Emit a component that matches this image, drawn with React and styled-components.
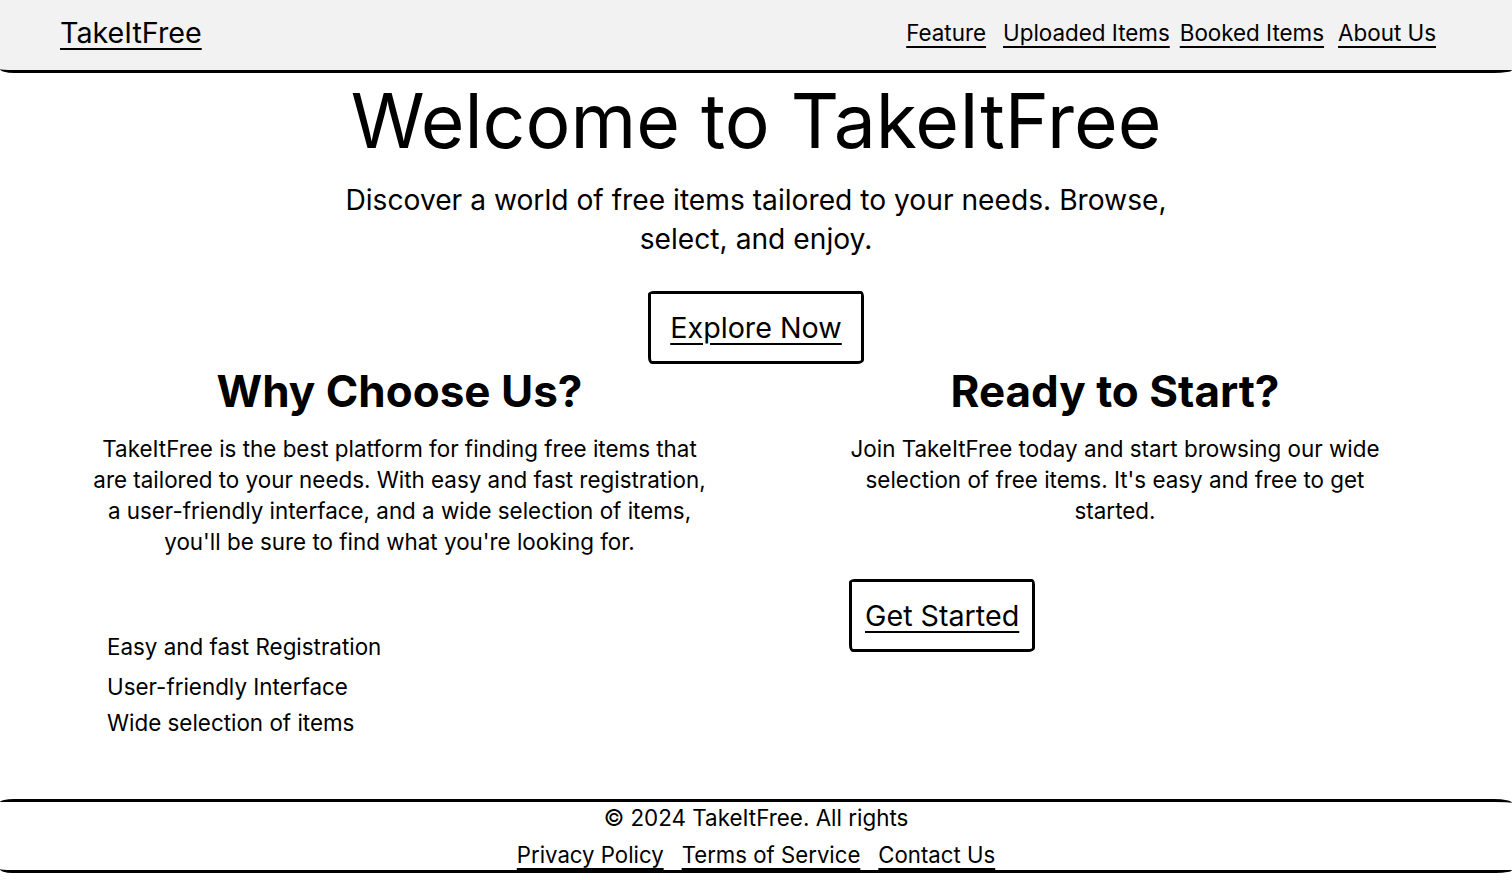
import React from "react";
import styled, { createGlobalStyle } from "styled-components";

const Global = createGlobalStyle`
  * { box-sizing: border-box; }
  html, body { margin: 0; padding: 0; background: #fff; }
  body {
    font-family: Inter, "Noto Sans", "Liberation Sans", sans-serif;
    color: #000;
  }
  a { color: inherit; }
`;

const Page = styled.div`
  width: 1512px;
  display: flex;
  flex-direction: column;
`;

const Header = styled.header`
  height: 73px;
  background: #f2f2f2;
  border-bottom: 3px solid #000;
  border-bottom-left-radius: 14px 4px;
  border-bottom-right-radius: 18px 3px;
  display: flex;
  align-items: center;
  justify-content: space-between;
  padding: 0 76px 4px 60px;
`;

const Logo = styled.a`
  font-size: 28.7px;
  line-height: 34px;
  text-decoration: underline;
  text-decoration-thickness: 2px;
  text-underline-offset: 5px;
`;

const Nav = styled.nav`
  display: flex;
  align-items: center;
`;

const NavLink = styled.a`
  font-size: 22.4px;
  line-height: 30px;
  margin-left: ${(p) => p.$ml || 0}px;
  text-decoration: underline;
  text-decoration-thickness: 2px;
  text-underline-offset: 5px;
`;

const Hero = styled.section`
  display: flex;
  flex-direction: column;
  align-items: center;
  text-align: center;
`;

const Title = styled.h1`
  margin: 0;
  font-size: 75px;
  line-height: 96px;
  font-weight: 400;
  letter-spacing: 0;
`;

const Lead = styled.p`
  margin: 12px 0 0;
  width: 840px;
  font-size: 28.2px;
  line-height: 39px;
`;

const SketchButton = styled.a`
  display: inline-block;
  border: 3px solid #000;
  border-radius: 6px 3px 7px 4px / 3px 6px 4px 7px;
  padding: ${(p) => p.$pad};
  font-size: 28.7px;
  line-height: 35px;
  text-decoration: underline;
  text-decoration-thickness: 2px;
  text-underline-offset: 5px;
  background: #fff;
`;

const HeroButton = styled(SketchButton)`
  margin-top: 32px;
`;

const Columns = styled.section`
  display: grid;
  grid-template-columns: 631px 560px;
  column-gap: 120px;
  padding-left: 84px;
  margin-top: 1px;
  padding-bottom: 61px;
`;

const Column = styled.div`
  display: flex;
  flex-direction: column;
  align-items: ${(p) => (p.$align === "start" ? "flex-start" : "center")};
`;

const Heading = styled.h2`
  margin: 0;
  width: 100%;
  text-align: center;
  font-size: 44px;
  line-height: 53px;
  font-weight: 700;
`;

const Body = styled.p`
  margin: 15px 0 0;
  width: 100%;
  text-align: center;
  font-size: 22.4px;
  line-height: 31px;
`;

const Features = styled.ul`
  list-style: none;
  margin: 74px 0 0;
  padding: 0 0 0 23px;
  width: 100%;
`;

const Feature = styled.li`
  font-size: 22.4px;
  line-height: 31px;
  margin-top: ${(p) => p.$mt || 0}px;
`;

const StartButton = styled(SketchButton)`
  margin: 53px 0 0 14px;
`;

const Footer = styled.footer`
  border-top: 3px solid #000;
  border-bottom: 3px solid #000;
  border-radius: 14px 18px 16px 12px / 3px 4px 3px 4px;
  display: flex;
  flex-direction: column;
  align-items: center;
`;

const Copy = styled.p`
  margin: 0;
  font-size: 22.4px;
  line-height: 31px;
`;

const FooterLinks = styled.div`
  display: flex;
  gap: 18px;
  margin-top: 6px;
`;

const FooterLink = styled.a`
  font-size: 22.2px;
  line-height: 31px;
  text-decoration: underline;
  text-decoration-thickness: 2px;
  text-underline-offset: 5px;
`;

export default function App() {
  return (
    <>
      <Global />
      <Page>
        <Header>
          <Logo>TakeItFree</Logo>
          <Nav>
            <NavLink>Feature</NavLink>
            <NavLink $ml={17}>Uploaded Items</NavLink>
            <NavLink $ml={10}>Booked Items</NavLink>
            <NavLink $ml={14}>About Us</NavLink>
          </Nav>
        </Header>
        <Hero>
          <Title>Welcome to TakeItFree</Title>
          <Lead>
            Discover a world of free items tailored to your needs. Browse,
            select, and enjoy.
          </Lead>
          <HeroButton $pad="16px 19px">Explore Now</HeroButton>
        </Hero>
        <Columns>
          <Column>
            <Heading>Why Choose Us?</Heading>
            <Body>
              TakeItFree is the best platform for finding free items that are
              tailored to your needs. With easy and fast registration, a
              user-friendly interface, and a wide selection of items, you'll be
              sure to find what you're looking for.
            </Body>
            <Features>
              <Feature>Easy and fast Registration</Feature>
              <Feature $mt={9}>User-friendly Interface</Feature>
              <Feature $mt={5}>Wide selection of items</Feature>
            </Features>
          </Column>
          <Column $align="start">
            <Heading>Ready to Start?</Heading>
            <Body>
              Join TakeItFree today and start browsing our wide selection of
              free items. It's easy and free to get started.
            </Body>
            <StartButton $pad="16px 13px">Get Started</StartButton>
          </Column>
        </Columns>
        <Footer>
          <Copy>© 2024 TakeItFree. All rights</Copy>
          <FooterLinks>
            <FooterLink>Privacy Policy</FooterLink>
            <FooterLink>Terms of Service</FooterLink>
            <FooterLink>Contact Us</FooterLink>
          </FooterLinks>
        </Footer>
      </Page>
    </>
  );
}
